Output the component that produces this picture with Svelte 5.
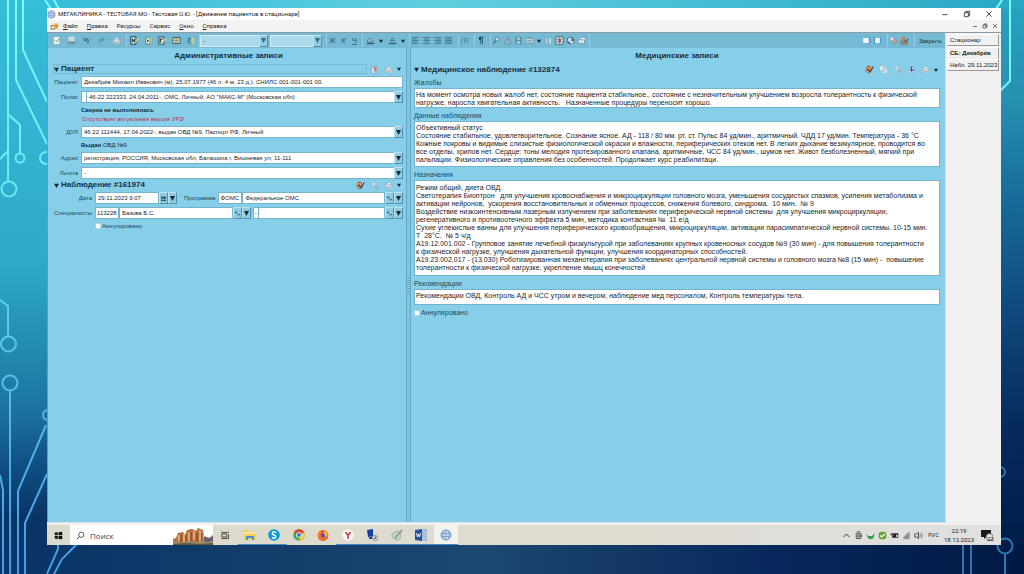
<script>
  // Inner markup of every glyph, drawn on a 12 x 12 grid
  const glyphs = {
    app: '<circle cx="6" cy="6" r="5" fill="#c9dcf2" stroke="#7195c8"/><path d="M1.5 4.5h9M1.5 7.5h9M6 1v10M3.5 2Q2 6 3.500 10M8.500 2Q10 6 8.500 10" fill="none" stroke="#6f94c6" stroke-width=".7"/>',
    form: '<path d="M1 4h6v6H1z" fill="#7a5a3a"/><path d="M5 2h6v7H5z" fill="#f0b848"/><path d="M2 5h3v4H2z" fill="#e8eefc"/><path d="M7 4h3v3H7z" fill="#e07030"/>',
    check: '<path d="M2 1h8v10H2z" fill="#f4fafc" stroke="#86a9b8" stroke-width=".8"/><path d="M4 6l2 2 3-4" fill="none" stroke="#5c8c40" stroke-width="1.300"/>',
    save: '<path d="M2 1h8v7H2z" fill="#cfe3ec"/><path d="M1 7h10v4H1z" fill="#7795a6"/><path d="M2 3h8M2 5h8" stroke="#a5c2cf" stroke-width=".6"/>',
    undo: '<path d="M3 2v4h4M3 6C6 1 11 5 7 10" fill="none" stroke="#4f7f98" stroke-width="1.800"/>',
    redo: '<path d="M9 2v4H5M9 6C6 1 1 5 5 10" fill="none" stroke="#5f90a9" stroke-width="1.600"/>',
    print: '<path d="M4 5l1-3 4 1-1 3z" fill="#fff" stroke="#8297a5" stroke-width=".5"/><path d="M1 6l3-2 7 2v3l-3 2-7-2z" fill="#dbe3e7" stroke="#8196a5" stroke-width=".6"/><path d="M2 7l6 2 2-2" fill="none" stroke="#647c8a" stroke-width=".8"/>',
    noteN: '<path d="M1 1h7v10H1z" fill="#b6d3df" stroke="#243d49" stroke-width="1.200"/><path d="M3 8V4l3 4V4" fill="none" stroke="#132a35" stroke-width="1.200"/><path d="M7 8l4-5" stroke="#e8dc45" stroke-width="1.800"/>',
    noteG: '<path d="M2 4l4-3 2 2v7l-2 1-4-1z" fill="#e3e9da" stroke="#405e6c" stroke-width=".9"/><path d="M4 5h2v3H4z" fill="#314b56"/><path d="M8 3l2 1-1 6" fill="none" stroke="#d7cf4a" stroke-width="1.500"/>',
    noteF: '<path d="M1 1h7v10H1z" fill="#c3dde5" stroke="#294552" stroke-width="1.100"/><path d="M3 9V4h3" fill="none" stroke="#162f3b" stroke-width="1.400"/><path d="M6 8l5-5" stroke="#e4d957" stroke-width="1.700"/>',
    list: '<path d="M1 2h10v8H1z" fill="#dae0a5" stroke="#3c5660" stroke-width="1.200"/><path d="M3 4h6M3 6h6M3 8h6" stroke="#506465" stroke-width=".8"/>',
    moon: '<path d="M6 1C1 2 1 9 5 11l1-2Q3 6 7 3z" fill="#53809a"/><path d="M6 1l5 3v5l-3 2 1-5z" fill="#ebd85a"/>',
    fill: '<path d="M2 6l4-4 3 4v2H2z" fill="#92b4c2" stroke="#44687a" stroke-width=".8"/><path d="M1 10h10" stroke="#31586b" stroke-width="1.800"/>',
    font: '<path d="M3 8l3-6 3 6M4 6h4" fill="none" stroke="#41697d" stroke-width="1"/><path d="M1 10h10" stroke="#31586b" stroke-width="1.600"/>',
    left: '<path d="M1 2h10M1 4h7M1 6h10M1 8h7M1 10h9" stroke="#3f7189" stroke-width="1"/>',
    center: '<path d="M1 2h10M3 4h6M1 6h10M3 8h6M1 10h10" stroke="#3f7189" stroke-width="1"/>',
    right: '<path d="M1 2h10M4 4h7M1 6h10M4 8h7M2 10h9" stroke="#3f7189" stroke-width="1"/>',
    justify: '<path d="M1 2h10M1 4h10M1 6h10M1 8h10M1 10h10" stroke="#3f7189" stroke-width="1"/>',
    spacing: '<path d="M2 10V5l2-2h7M6 10V5h4v5M5 7h5" fill="none" stroke="#5289a1" stroke-width="1"/>',
    pilcrow: '<path d="M10 1H5a3 3 0 000 5h1v5h1V2h1v9h1V2h1z" fill="#17475f"/>',
    find: '<circle cx="7" cy="4" r="2.500" fill="#c3e0ed" stroke="#497990"/><path d="M5 6l-3 4" stroke="#2e5e76" stroke-width="1.500"/>',
    person: '<circle cx="6" cy="3" r="2" fill="#97b2bd" stroke="#547b8d" stroke-width=".7"/><path d="M2 11V7l3-2h3l2 2v4z" fill="#8eb6c7" stroke="#5e8598" stroke-width=".8"/>',
    film: '<path d="M2 1h8v10H2z" fill="#5f8ea4"/><path d="M4 2h4v3H4zM4 7h4v3H4z" fill="#afd0dd"/>',
    card: '<path d="M1 3h10v7H1z" fill="#bfd9e1" stroke="#668b9c" stroke-width=".8"/><path d="M3 1h6v3H3z" fill="#7da1af"/><path d="M3 6h6M3 8h6" stroke="#5d8190" stroke-width=".8"/>',
    columns: '<path d="M2 2h3v8H2zM6 2h4v9H6z" fill="#b9d9e8" stroke="#719eb3" stroke-width=".7"/>',
    table: '<path d="M1 1h10v10H1z" fill="#d8e6e7" stroke="#34576a"/><path d="M1 4h10M1 8h10M6 1v10" stroke="#608392"/><path d="M4 4h4v4H4z" fill="#93676a"/>',
    globe: '<circle cx="6" cy="6" r="5" fill="#597080"/><path d="M4 2l4 1-2 3 4 1-2 4-3-3-3-2z" fill="#d5e2e8"/>',
    folder: '<path d="M1 5h9v5H2z" fill="#d8e4e8" stroke="#577d8f" stroke-width=".7"/><path d="M3 4l3-2h5v3" fill="#eef2f2" stroke="#718a96" stroke-width=".7"/>',
    paneA: '<path d="M1 2h10v8H1z" fill="#f4fcff" stroke="#5aa3d0"/><path d="M9 2h2v8H9z" fill="#4c9ed4"/>',
    paneB: '<path d="M1 2h10v8H1z" fill="#f4fcff" stroke="#5aa3d0"/><path d="M1 2h2v8H1zM9 2h2v8H9z" fill="#4c9ed4"/>',
    tools: '<path d="M1 3l4-2 3 4-4 2z" fill="#e5e9ed" stroke="#7091a1" stroke-width=".6"/><path d="M7 3l4 4-3 4-3-3z" fill="#cc9c8a" stroke="#7c7582" stroke-width=".6"/>',
    stamp: '<path d="M3 1h4v5H3z" fill="#c57a54"/><path d="M1 7h9v4H1z" fill="#aa8970" stroke="#705f58" stroke-width=".7"/><path d="M6 8l5-4" stroke="#465d70" stroke-width="1.400"/>',
    edit: '<path d="M2 3l3-2 3 2v5l-3 3-4-3z" fill="#d9985e" stroke="#875532" stroke-width=".7"/><path d="M3 5l4 4 4-7" fill="none" stroke="#493a42" stroke-width="1.500"/><path d="M3 2h3" stroke="#c63b22" stroke-width="1.300"/>',
    copy: '<path d="M1 1h6v7H1zM5 4h6v7H5z" fill="#dcedf5" stroke="#9bb9c8" stroke-width=".8"/><path d="M6 6h4M6 8h4" stroke="#adc3cf" stroke-width=".7"/>',
    lens: '<circle cx="5" cy="4" r="3" fill="#b8deef" stroke="#a3bbc9"/><path d="M7 6l4 5" stroke="#c0a391" stroke-width="1.700"/>',
    pin: '<circle cx="6" cy="7" r="4" fill="#e2ebf7" stroke="#6681ae" stroke-width=".7"/><path d="M6 2v6M4 6l2 2 3-2" fill="none" stroke="#2f4d9c" stroke-width="1.600"/>',
    history: '<path d="M2 2h7v9H2z" fill="#e1e6ea" stroke="#7f99a7" stroke-width=".8"/><path d="M4 4h4l-2 4" fill="none" stroke="#bd553b" stroke-width="1.500"/><path d="M5 9h4" stroke="#718a99"/>',
    windows: '<path d="M1 2l4-.5v4H1zM6 1.500L11 1v4.500H6zM1 6.500h4v4L1 10zM6 6.500h5V11l-5-.5z" fill="#111"/>',
    search: '<circle cx="7" cy="5" r="3.500" fill="none" stroke="#222" stroke-width="1"/><path d="M4.500 7.500L1 11" stroke="#222" stroke-width="1.100"/>',
    taskview: '<path d="M1 4h7v4H1zM1 1v1h7V1M1 11v-1h7v1M10 1v2M10 5v6" fill="none" stroke="#222" stroke-width="1"/>',
    explorer: '<path d="M0 1h5l1 2h6v8H0z" fill="#f3cd55"/><path d="M0 3h12v2H0z" fill="#f9e49b"/><path d="M2 7h8v4H8V9H4v2H2z" fill="#3f94cf"/>',
    skype: '<circle cx="6" cy="6" r="5.800" fill="#079bd9"/><path d="M8 4Q7 2 5 3 3 5 6 6q3 1 1 3-2 1-3-1" fill="none" stroke="#fff" stroke-width="1.400"/>',
    chrome: '<circle cx="6" cy="6" r="5.800" fill="#3da955"/><path d="M1 3a6 6 0 0110 0L8 6H4z" fill="#de4638"/><path d="M11 3a6 6 0 01-5 9l2-6z" fill="#f6c83c"/><circle cx="6" cy="6" r="2.800" fill="#fff"/><circle cx="6" cy="6" r="2" fill="#3e79c9"/>',
    firefox: '<circle cx="6" cy="6.500" r="5.400" fill="#ee4b32"/><path d="M1 4l2-2 2 2 4-3q4 5 0 9-6 3-8-3z" fill="#f57b28"/><circle cx="6" cy="6.500" r="2.400" fill="#7b4bb0"/><path d="M8 1q4 4 1 7L7 4z" fill="#fbc53e"/>',
    yandex: '<circle cx="6" cy="6" r="5.800" fill="#f8f8f8"/><path d="M3.500 3L6 6.500 8.500 3M6 6v4" fill="none" stroke="#d8353d" stroke-width="1.500"/>',
    remote: '<path d="M1 1l6-1v7l-5 1z" fill="#153ca6"/><path d="M3 8l4-1 1 3H3z" fill="#29498d"/><circle cx="9" cy="9" r="2.800" fill="#d2d6d7" stroke="#7f8994" stroke-width=".7"/><path d="M8 9l1 1 1-3" fill="none" stroke="#5a6771"/>',
    pen: '<path d="M1 5l5-3 4 2-1 6-5 1-3-3z" fill="#c5d5ca" stroke="#8ba29a" stroke-width=".7"/><path d="M4 9l7-8" stroke="#80958d" stroke-width="1.500"/>',
    word: '<path d="M5 1h7v10H5z" fill="#eef3fc" stroke="#456fac" stroke-width=".7"/><path d="M7 3h4M7 5h4M7 7h4M7 9h4" stroke="#4772b0" stroke-width=".8"/><path d="M0 1l7-1v12l-7-1z" fill="#26529a"/><path d="M1.500 4l1 4 1-3 1 3 1-4" fill="none" stroke="#fff" stroke-width=".9"/>',
    up: '<path d="M2 8l4-4 4 4" fill="none" stroke="#222" stroke-width="1.200"/>',
    meet: '<path d="M4 1h4M3 3h6v7H3zM5 5h2v3H5zM10 5v3" fill="none" stroke="#333" stroke-width="1"/>',
    green: '<path d="M1 4q1 3 5 3 4 0 5-5 1 9-5 9-5-1-5-7z" fill="#29a345"/><path d="M4 2h4v4H4z" fill="#d6efd9"/>',
    shield: '<rect x="1" y="1" width="10" height="10" rx="3" fill="#67a928"/><path d="M3 6l2 2 4-4" fill="none" stroke="#fff" stroke-width="1.500"/>',
    battery: '<path d="M3 3h8v6H3z" fill="#222"/><path d="M1 3h3v3H1z" fill="#222" stroke="#ddd" stroke-width=".5"/><path d="M8 5h2v3H8z" fill="#ddd"/>',
    wifi: '<path d="M1 11L10 2v9z" fill="#a3a3a0"/><path d="M2 9q3-5 8-7M4 10q2-4 6-5M6 10q2-2 4-2" fill="none" stroke="#555" stroke-width=".9"/>',
    sound: '<path d="M1 4h2l3-2v8L3 8H1z" fill="none" stroke="#222"/><path d="M8 4q1 2 0 4M10 2q2 4 0 8" fill="none" stroke="#555" stroke-width=".9"/>',
    notice: '<path d="M0 1h10v7H5L3 10V8H0z" fill="#1b1b1b"/><circle cx="8.500" cy="8" r="3.500" fill="#dedede" stroke="#444" stroke-width=".6"/>',
    min: '<path d="M2 7h8" stroke="#222" stroke-width="1.200"/>',
    restore: '<path d="M2 4h6v6H2zM4 4V2h6v6H8" fill="none" stroke="#222" stroke-width="1.200"/>',
    close: '<path d="M2 2l8 8M10 2l-8 8" stroke="#222" stroke-width="1.200"/>',
  };

  const menus = ['Файл', 'Правка', 'Ресурсы', 'Сервис', 'Окно', 'Справка'];
  const underlined = new Set(['Файл', 'Правка', 'Окно', 'Справка']);

  const fileTools = [['check', 'Применить'], ['save', 'Сохранить'], ['undo', 'Отменить'], ['redo', 'Вернуть'], ['print', 'Печать']];
  const noteTools = [['noteN', 'Новая запись'], ['noteG', 'Группа'], ['noteF', 'Форма'], ['list', 'Список'], ['moon', 'Дежурство']];
  const alignTools = [['left', 'По левому краю'], ['center', 'По центру'], ['right', 'По правому краю'], ['justify', 'По ширине']];
  const insertTools = [['find', 'Найти'], ['person', 'Врач'], ['film', 'Шаблон'], ['card', 'Карта']];
  const extraTools = [['columns', 'Колонки'], ['table', 'Таблица'], ['globe', 'Сеть'], ['folder', 'Папка']];

  const records = [
    { id: 'complaints', label: 'Жалобы', rows: 2, text: 'На момент осмотра новых жалоб нет, состояние пациента стабильное., состояние с незначительным улучшением возросла толерантность к физической\nнагрузке, наросла хвигательная активность.   Назначенные процедуры переносит хорошо.' },
    { id: 'status', label: 'Данные наблюдения', rows: 5, text: 'Объективный статус\nСостояние стабильное, удовлетворительное. Сознание ясное. АД - 118 / 80 мм. рт. ст. Пульс 84 уд/мин., аритмичный. ЧДД 17 уд/мин. Температура - 36 °C\nКожные покровы и видимые слизистые физиологической окраски и влажности, периферических отеков нет. В легких дыхание везикулярное, проводится во\nвсе отделы, хрипов нет. Сердце: тоны мелодия протезированного клапана, аритмичные, ЧСС 84 уд/мин., шумов нет. Живот безболезненный, мягкий при\nпальпации. Физиологические оправления без особенностей. Продолжает курс реабилитаци.' },
    { id: 'orders', label: 'Назначения', rows: 11, text: 'Режим общий, диета ОВД.\nСветотерапия Биоптрон   для улучшения кровоснабжения и микроциркуляции головного мозга, уменьшения сосудистых спазмов, усиления метаболизма и\nактивации нейронов,  ускорения восстановительных и обменных процессов, снижения болевого, синдрома.  10 мин.  № 9\nВоздействие низкоинтенсивным лазерным излучением при заболеваниях периферической нервной системы  для улучшения микроциркуляции,\nрегенеративного и противоотечного эффекта 5 мин, методика контактная №  11 е/д\nСухие углекислые ванны для улучшения периферического кровообращения, микроциркуляции, активации парасимпатической нервной системы. 10-15 мин.\nТ  28°C.  № 5 ч/д\nА19.12.001.002 - Групповое занятие лечебной физкультурой при заболеваниях крупных кровеносных сосудов №9 (30 мин) - для повышения толерантности\nк физической нагрузке, улучшения дыхательной функции, улучшения координаторных способностей.\nА19.23.002.017 - (13.030) Роботизированная механотерапия при заболеваниях центральной нервной системы и головного мозга №8 (15 мин) -  повышение\nтолерантности к физической нагрузке, укрепление мышц конечностей' },
    { id: 'advice', label: 'Рекомендации', rows: 1, text: 'Рекомендации ОВД, Контроль АД и ЧСС утром и вечером, наблюдение мед персоналом, Контроль температуры тела.' },
  ];

  const apps = [
    ['taskview', 'Представление задач', false], ['explorer', 'Проводник', true], ['skype', 'Skype', true],
    ['chrome', 'Chrome', false], ['firefox', 'Firefox', false], ['yandex', 'Яндекс', true],
    ['remote', 'Удалённый стол', true], ['pen', 'Заметки', true], ['word', 'Word', true], ['app', 'Мегаклиника', true],
  ];
  const tray = ['up', 'meet', 'green', 'shield', 'battery', 'wifi', 'sound'];
</script>

{#snippet icon(name)}
  <svg class="icon" viewBox="0 0 12 12" aria-hidden="true">{@html glyphs[name]}</svg>
{/snippet}

{#snippet tool(name, label)}
  <button class="tool" aria-label={label}>{@render icon(name)}</button>
{/snippet}

{#snippet caret()}
  <svg class="caret" viewBox="0 0 6 6" aria-hidden="true"><path d="M0 1h6L3 6z" /></svg>
{/snippet}

{#snippet arrow()}
  <span class="arrow"><svg viewBox="0 0 6 6" aria-hidden="true"><path d="M0 0h6L3 6z" /></svg></span>
{/snippet}

{#snippet dots()}
  <button class="mini" aria-label="Выбрать"><svg viewBox="0 0 6 6" aria-hidden="true"><path d="M0 1h2v1H0zM2 2h1v1H2zM3 4h1v1H3zM5 4h1v1H5z" /></svg></button>
{/snippet}

{#snippet drop(id, value)}
  <span class="combo"><select {id}><option>{value}</option></select>{@render arrow()}</span>
{/snippet}

<div class="desktop">
  <svg class="wallpaper" viewBox="0 0 1024 574" preserveAspectRatio="none" aria-hidden="true">
    <defs>
      <linearGradient id="sea" x2="0" y2="1">
        <stop offset="0" stop-color="#36bdd8" /><stop offset=".45" stop-color="#2fabc8" />
        <stop offset=".6" stop-color="#238daf" /><stop offset=".72" stop-color="#1b71a0" />
        <stop offset=".82" stop-color="#104b80" /><stop offset=".9" stop-color="#0a3466" /><stop offset="1" stop-color="#0a3566" />
      </linearGradient>
      <linearGradient id="deep" x2="0" y2="1">
        <stop offset="0" stop-color="#27a3c0" /><stop offset=".17" stop-color="#2691b0" />
        <stop offset=".35" stop-color="#176b98" /><stop offset=".55" stop-color="#10477a" />
        <stop offset=".75" stop-color="#052a5d" /><stop offset="1" stop-color="#011944" />
      </linearGradient>
      <linearGradient id="floor"><stop offset="0" stop-color="#0a3566" /><stop offset=".45" stop-color="#1c4770" /><stop offset=".75" stop-color="#07275a" /><stop offset="1" stop-color="#011944" /></linearGradient>
      <linearGradient id="roof"><stop offset="0" stop-color="#36bdd8" /><stop offset=".4" stop-color="#60cfe0" /><stop offset="1" stop-color="#27a8c4" /></linearGradient>
      <linearGradient id="trace" gradientUnits="userSpaceOnUse" x1="0" y1="0" x2="0" y2="574">
        <stop offset="0" stop-color="#7afcff" /><stop offset=".3" stop-color="#68edf8" />
        <stop offset=".6" stop-color="#5cc4e8" /><stop offset="1" stop-color="#419be6" />
      </linearGradient>
    </defs>
    <rect width="1024" height="574" fill="url(#sea)" />
    <rect x="980" width="44" height="574" fill="url(#deep)" />
    <rect x="47" width="977" height="9" fill="url(#roof)" />
    <rect x="47" y="544" width="977" height="30" fill="url(#floor)" />
    <g fill="none" stroke="url(#trace)" stroke-width="2">
      <path d="M8 0L8.100 181M16 0v80l31 64M23 0v50l24 52M9 115l11 10v29M8 151l-8 8M45 0l6 9M54 0l5 9" />
      <circle cx="9" cy="189" r="7.500" /><circle cx="20" cy="158" r="4.500" /><circle cx="46" cy="158" r="6" />
      <path d="M0 300l8 6 .1 31M10 391l.1 183M0 475l3 15v84M46 425L18 491v83M47 474L25 523v51" />
      <circle cx="8.500" cy="344" r="7.500" /><circle cx="10" cy="383" r="7.500" /><circle cx="48" cy="415" r="5" />
      <path d="M58 544v5l-11 25M77 544L62 559l-8 15M1002 0l-6 9M1010 0v81l-11 11" />
    </g>
    <g fill="none" stroke="#2b77b4" stroke-width="2">
      <circle cx="1000" cy="472" r="5" /><circle cx="1005" cy="546" r="7.500" />
      <path d="M1005 554v20M963 544v30M971 544v30" />
    </g>
  </svg>

  <div class="window">
    <header class="titlebar">
      {@render icon('app')}
      <h1>МЕГАКЛИНИКА - ТЕСТОВАЯ МО - Тестовая О.Ю. - [Движение пациентов в стационаре]</h1>
      <div class="winbuttons">
        <button aria-label="Свернуть">{@render icon('min')}</button>
        <button aria-label="Развернуть">{@render icon('restore')}</button>
        <button aria-label="Выход">{@render icon('close')}</button>
      </div>
    </header>

    <nav class="menubar">
      {@render icon('form')}
      {#each menus as m}
        <button>{#if underlined.has(m)}<u>{m[0]}</u>{m.slice(1)}{:else}{m}{/if}</button>
      {/each}
      <div class="docbuttons">
        <button aria-label="Свернуть документ">{@render icon('min')}</button>
        <button aria-label="Восстановить документ">{@render icon('restore')}</button>
        <button aria-label="Закрыть документ">{@render icon('close')}</button>
      </div>
    </nav>

    <div class="client">
      <div class="work">
        <div class="toolbar">
          <div class="group wide">{#each fileTools as [n, l]}{@render tool(n, l)}{/each}</div>
          <i class="sep slim"></i>
          <div class="group note">{#each noteTools as [n, l]}{@render tool(n, l)}{/each}</div>
          <i class="sep slim"></i>
          <div class="group fonts">
            <span class="combo family"><select aria-label="Шрифт"><option>-</option></select>{@render arrow()}</span>
            <span class="combo size"><select aria-label="Размер"><option></option></select>{@render arrow()}</span>
          </div>
          <i class="sep"></i>
          <div class="group letters"><button class="tool">Ж</button><button class="tool"><em>К</em></button><button class="tool"><u>Ч</u></button></div>
          <i class="sep slim"></i>
          <div class="group note">{@render tool('fill', 'Заливка')}{@render caret()}{@render tool('font', 'Цвет текста')}{@render caret()}</div>
          <i class="sep slim"></i>
          <div class="group">{#each alignTools as [n, l]}{@render tool(n, l)}{/each}</div>
          <i class="sep"></i>
          <div class="group">{@render tool('spacing', 'Интервал')}</div>
          <i class="sep"></i>
          <div class="group">{@render tool('pilcrow', 'Знаки')}</div>
          <i class="sep"></i>
          <div class="group">
            {#each insertTools as [n, l]}{@render tool(n, l)}{/each}
            {@render caret()}
            {#each extraTools as [n, l]}{@render tool(n, l)}{/each}
          </div>
          <i class="sep slim"></i>
          <div class="group end">{@render tool('paneA', 'Панель справа')}{@render tool('paneB', 'Две панели')}</div>
          <i class="sep"></i>
          <div class="group">{@render tool('tools', 'Настройки')}{@render tool('stamp', 'Подпись')}</div>
          <i class="sep"></i>
          <button class="leave">Закрыть</button>
        </div>

        <main class="panes">
          <section class="pane admin">
            <h2>Административные записи</h2>
            <div class="head">
              <h3 class="boxed">{@render caret()}Пациент</h3>
              {@render tool('history', 'История')}{@render tool('print', 'Печать пациента')}{@render caret()}
            </div>
            <div class="form">
              <label for="patient">Пациент</label>
              <input id="patient" value="Декабрёв Михаил Иванович (м), 25.07.1977 (46 л. 4 м. 23 д.). СНИЛС 001-001-001 00." />
              <label for="policy">Полис</label>
              <div class="line"><span class="stub"></span>{@render drop('policy', '46-22 222333, 24.04.2011-, ОМС, Личный, АО "МАКС-М" (Московская обл)')}</div>
              <div class="hints"><b>Сверка не выполнялась</b><span class="warn">Отсутствует актуальная версия УРЗ!</span></div>
              <label for="doc">ДУЛ</label>
              {@render drop('doc', '46 22 111444, 17.04.2022-, выдан ОВД №9, Паспорт РФ, Личный')}
              <div class="hints"><span><b>Выдан</b> ОВД №9</span></div>
              <label for="address">Адрес</label>
              {@render drop('address', 'регистрация, РОССИЯ, Московская обл, Балашиха г, Вишневая ул, 11-111')}
              <label for="benefit">Льгота</label>
              {@render drop('benefit', '-')}
            </div>
            <div class="head">
              <h3>{@render caret()}Наблюдение #161974</h3>
              {@render tool('edit', 'Изменить')}{@render tool('lens', 'Просмотр')}{@render tool('print', 'Печать наблюдения')}{@render caret()}
            </div>
            <div class="form visit">
              <label for="date">Дата</label>
              <div class="line">
                <div class="line date">
                  <input id="date" value="29.11.2023 9:07" />
                  <button class="mini" aria-label="Календарь"><svg viewBox="0 0 6 6" aria-hidden="true"><path d="M0 1h6v1H0zM0 3h6v1H0zM0 5h6v1H0z" /></svg></button>
                  <button class="mini" aria-label="Список дат"><svg viewBox="0 0 6 6" aria-hidden="true"><path d="M0 0h6L3 6z" /></svg></button>
                </div>
                <label class="program" for="program">Программа</label>
                <input class="code" aria-label="Код программы" value="ФОМС" />
                <input class="grow" id="program" value="Федеральное ОМС" />
                {@render dots()}
                <button class="mini" aria-label="Список программ"><svg viewBox="0 0 6 6" aria-hidden="true"><path d="M0 0h6L3 6z" /></svg></button>
              </div>
              <label for="doctor">Специалисты</label>
              <div class="line">
                <input class="code" id="doctor" value="113228" />
                <input class="name" aria-label="Врач" value="Базова Б.С." />
                {@render dots()}
                <button class="mini" aria-label="Список врачей"><svg viewBox="0 0 6 6" aria-hidden="true"><path d="M0 0h6L3 6z" /></svg></button>
                <input class="dash" aria-label="Код второго врача" value="-" />
                <input class="grow" aria-label="Второй врач" />
                {@render dots()}
                <button class="mini" aria-label="Список вторых врачей"><svg viewBox="0 0 6 6" aria-hidden="true"><path d="M0 0h6L3 6z" /></svg></button>
              </div>
              <label class="tick"><input type="checkbox" />Аннулировано</label>
            </div>
          </section>

          <div class="splitter"><i></i></div>

          <section class="pane medical">
            <h2>Медицинские записи</h2>
            <div class="head">
              <h3>{@render caret()}Медицинское наблюдение #132874</h3>
              {@render tool('edit', 'Изменить запись')}{@render tool('copy', 'Копировать')}{@render tool('lens', 'Просмотр записи')}{@render tool('pin', 'Закрепить')}{@render tool('print', 'Печать записи')}{@render caret()}
            </div>
            {#each records as r}
              <label for={r.id}>{r.label}</label>
              <textarea id={r.id} class={r.id} rows={r.rows} value={r.text}></textarea>
            {/each}
            <label class="tick"><input type="checkbox" />Аннулировано</label>
          </section>
        </main>
      </div>

      <aside class="tabs">
        <button>Стационар</button>
        <button class="current">СБ: Декабрёв</button>
        <button>Набл. 29.11.2023</button>
      </aside>
    </div>

    <footer class="taskbar">
      <button class="start" aria-label="Пуск">{@render icon('windows')}</button>
      <div class="find">
        {@render icon('search')}
        <input aria-label="Поиск" placeholder="Поиск" />
        <svg class="canyon" viewBox="0 0 40 18" aria-hidden="true">
          <path d="M0 18V12l3-1 2-5 5-1 2 3 2-5 5-1 4 2 2-3 5 2 1 6 5 2 4-2v9z" fill="#b86d3c" />
          <path d="M6 8v6M11 7v8M16 5v10M21 4v9M27 3v12M30 5v7" stroke="#e2a873" stroke-width="2" />
          <path d="M8 8v7M13 9v6M18 5v10M24 6v8M29 6v9" stroke="#77452d" />
          <path d="M0 14l8 1 8-1 9 1 7-3 8-2v8H0z" fill="#9a8a66" />
          <path d="M31 10l6 1 3-3v6l-8 1z" fill="#665d78" />
          <path d="M0 17l12-1 16 1 12-1v2H0z" fill="#605438" />
        </svg>
      </div>
      <div class="apps">
        {#each apps as [n, l, open]}
          <button aria-label={l} class:open class:front={n === 'app'}>{@render icon(n)}</button>
        {/each}
      </div>
      <div class="tray">{#each tray as t}{@render icon(t)}{/each}</div>
      <span class="lang">РУС</span>
      <div class="clock"><span>22:19</span><span>18.12.2023</span></div>
      <button class="notice" aria-label="Уведомления">{@render icon('notice')}<span>22</span></button>
    </footer>
  </div>
</div>

<style>
  :global(body) { margin: 0; }
  .desktop, .desktop * { box-sizing: border-box; }
  .desktop {
    position: relative;
    display: flex;
    min-height: 100vh;
    padding: 8px 23px 29px 47px;
    font: 6px/8px "Liberation Sans", Arial, sans-serif;
    color: #14303f;
  }
  .wallpaper { position: absolute; inset: 0; width: 100%; height: 100%; }
  .window { position: relative; flex: 1; min-width: 0; display: flex; flex-direction: column; background: #f0f0f0; }
  button, input, select, textarea { font: inherit; color: inherit; margin: 0; padding: 0; border: 0; border-radius: 0; background: none; }
  button { display: flex; align-items: center; justify-content: center; white-space: nowrap; }
  h1, h2, h3 { margin: 0; }
  svg { display: block; flex: none; }
  .icon { width: 9px; height: 9px; }
  .caret { width: 4px; height: 4px; margin: 0 2px; fill: #0c2a3a; }

  .titlebar { display: flex; align-items: center; gap: 2px; height: 12px; padding: 0 8px 0 0; background: #fff; color: #222; }
  .titlebar h1 { flex: 1; font: 6px/8px Roboto, "Liberation Sans", sans-serif; }
  .winbuttons { display: flex; gap: 14px; }
  .winbuttons .icon { width: 8px; height: 8px; }
  .menubar { display: flex; align-items: center; gap: 9px; height: 12px; padding: 0 3px; font-family: Roboto, "Liberation Sans", sans-serif; color: #222; background: #f3f3f3; }
  .menubar > .icon { margin-right: -5px; }
  .docbuttons { display: flex; gap: 4px; margin-left: auto; }
  .docbuttons .icon { width: 6px; height: 6px; stroke-width: 2; }

  .client { flex: 1; display: grid; grid-template-columns: 1fr 54px; border-top: 1px solid #8b9ba3; }
  .work { display: flex; flex-direction: column; min-width: 0; margin: 0 2px 3px 0; padding-left: 2px; background: #87cee9; border-left: 1px solid #8a8f92; box-shadow: 1px 1px 0 #d9e2e8; }
  .toolbar { display: flex; align-items: center; height: 15px; margin-left: -2px; padding-left: 1px; background: #75b9d3; }
  .group { display: flex; align-items: center; }
  .tool { width: 11px; height: 12px; }
  .wide .tool { width: 15px; }
  .note .tool { width: 14px; }
  .letters { font-weight: bold; color: #40738b; }
  .letters .tool { font-size: 7px; }
  .sep { width: 5px; height: 13px; border-right: 1px solid #99cee2; }
  .slim { width: 3px; }
  .end { margin-left: auto; }
  .fonts { gap: 2px; }
  .family { width: 68px; }
  .size { width: 52px; }
  .leave { padding: 0 3px 0 4px; }

  .combo { display: grid; height: 12px; min-width: 0; }
  .combo > * { grid-area: 1 / 1; }
  .combo select, .form input { appearance: none; min-width: 0; width: 100%; height: 12px; padding: 0 2px; background: #fff; border: 1px solid #76b4cd; color: #17252c; }
  .toolbar .combo select { background: #abd9ea; border-color: #d4edf6; }
  .arrow, .mini { display: flex; align-items: center; justify-content: center; flex: none; width: 9px; height: 12px; background: #8fcbe1; border: 1px solid #4e92b0; border-top-color: #bfe4f1; border-left-color: #bfe4f1; }
  .arrow { justify-self: end; pointer-events: none; }
  .arrow svg, .mini svg { width: 5px; height: 5px; fill: #0c2a3a; }
  .toolbar .arrow svg { fill: #34687f; }

  .panes { flex: 1; display: grid; grid-template-columns: 2fr 5px 3fr; }
  .pane { min-width: 0; padding: 3px 3px 0 4px; }
  .pane h2 { font-size: 8px; line-height: 10px; text-align: center; margin-bottom: 3px; }
  .head { display: flex; align-items: center; height: 10px; }
  .head h3 { flex: 1; display: flex; align-items: center; font-size: 8px; line-height: 8px; gap: 2px; height: 10px; }
  .head h3 .caret { width: 5px; height: 5px; margin: 0; }
  .head .boxed { border: 1px solid #78b8d2; margin-left: -1px; }
  .admin .head .tool { width: 14px; }
  .form { display: grid; grid-template-columns: 24px 1fr; gap: 3px; align-items: center; margin: 2px 0 1px; }
  .form > label { justify-self: end; white-space: nowrap; color: #204a60; }
  .hints { grid-column: 2; display: flex; flex-direction: column; gap: 1px; }
  .warn { color: #b83248; padding-left: 1px; }
  .line { display: flex; align-items: center; min-width: 0; }
  .line .combo { flex: 1; }
  .stub { width: 5px; height: 12px; background: #fff; border: 1px solid #76b4cd; border-right: 0; }
  .visit { grid-template-columns: 38px 1fr; }
  .date { width: 82px; }
  .program { padding: 0 3px 0 7px; color: #204a60; }
  .form .code { width: 24px; flex: none; padding: 0 1px; }
  .form .name { width: 114px; flex: none; }
  .form .dash { width: 5px; flex: none; margin-left: 2px; padding: 0 1px; border-right: 0; }
  .form .grow { flex: 1; }
  .form > .tick { grid-column: 2; justify-self: start; }
  .tick { display: flex; align-items: center; gap: 1px; }
  .tick input, .form .tick input { appearance: none; flex: none; width: 6px; height: 6px; padding: 0; background: #fff; border: 1px solid #b4d3e0; }

  .splitter { display: flex; align-items: center; justify-content: center; border: 1px solid #66a9c5; border-width: 0 1px; background: #80c5e0; }
  .splitter i { width: 3px; height: 15px; background: repeating-linear-gradient(#5c9bb6 0 1px, #a0d7eb 1px 2px); }

  .medical { display: flex; flex-direction: column; padding: 3px 5px 0 3px; font-size: 7px; }
  .medical .head { height: 11px; }
  .medical .head .tool { width: 14px; }
  .medical > label { line-height: 11px; margin-top: 2px; color: #204a60; }
  textarea { display: block; width: 100%; padding: 2px 1px; line-height: 8px; white-space: pre; overflow: hidden; resize: none; background: #fff; border: 1px solid #76b4cd; color: #17252c; }
  .complaints { height: 20px; }
  .status { height: 46px; }
  .orders { height: 96px; padding-top: 3px; }
  .advice { height: 16px; }

  .tabs { display: flex; flex-direction: column; padding: 1px 2px 0 0; }
  .tabs button { justify-content: flex-start; height: 12px; padding-left: 2px; color: #222; border: 1px solid #fff; border-right-color: #999; border-bottom-color: #999; }
  .tabs .current { font-weight: bold; margin-top: 1px; border-bottom-color: #eee; }

  .taskbar { display: flex; align-items: center; height: 20px; background: linear-gradient(90deg, #dcdacb, #dfdcd2 60%, #e0e0e0); color: #222; font-family: "Open Sans", "Noto Sans", sans-serif; }
  .start { width: 23px; height: 20px; }
  .find { display: flex; align-items: center; gap: 5px; width: 143px; height: 20px; padding-left: 6px; background: #fff; }
  .find input { flex: 1; min-width: 0; font-size: 8px; line-height: 10px; height: 12px; }
  .find input::placeholder { color: #444; opacity: 1; }
  .canyon { width: 40px; height: 18px; align-self: flex-end; }
  .apps { display: grid; grid-template-columns: repeat(10, 1fr); width: 245px; }
  .apps button { height: 20px; padding-top: 1px; border-bottom: 1px solid transparent; }
  .apps .icon { width: 12px; height: 12px; }
  .apps button:first-child .icon { width: 9px; height: 9px; }
  .apps .open { border-bottom-color: #3f8cc8; }
  .apps .front { background: #f3f2ed; }
  .tray { display: flex; gap: 3px; margin-left: auto; }
  .lang { padding: 0 6px 0 5px; }
  .clock { display: flex; flex-direction: column; align-items: center; width: 28px; line-height: 9px; font-family: Roboto, sans-serif; }
  .notice { position: relative; width: 28px; height: 20px; }
  .notice .icon { width: 12px; height: 12px; }
  .notice span { position: absolute; right: 7px; bottom: 2px; }
</style>
